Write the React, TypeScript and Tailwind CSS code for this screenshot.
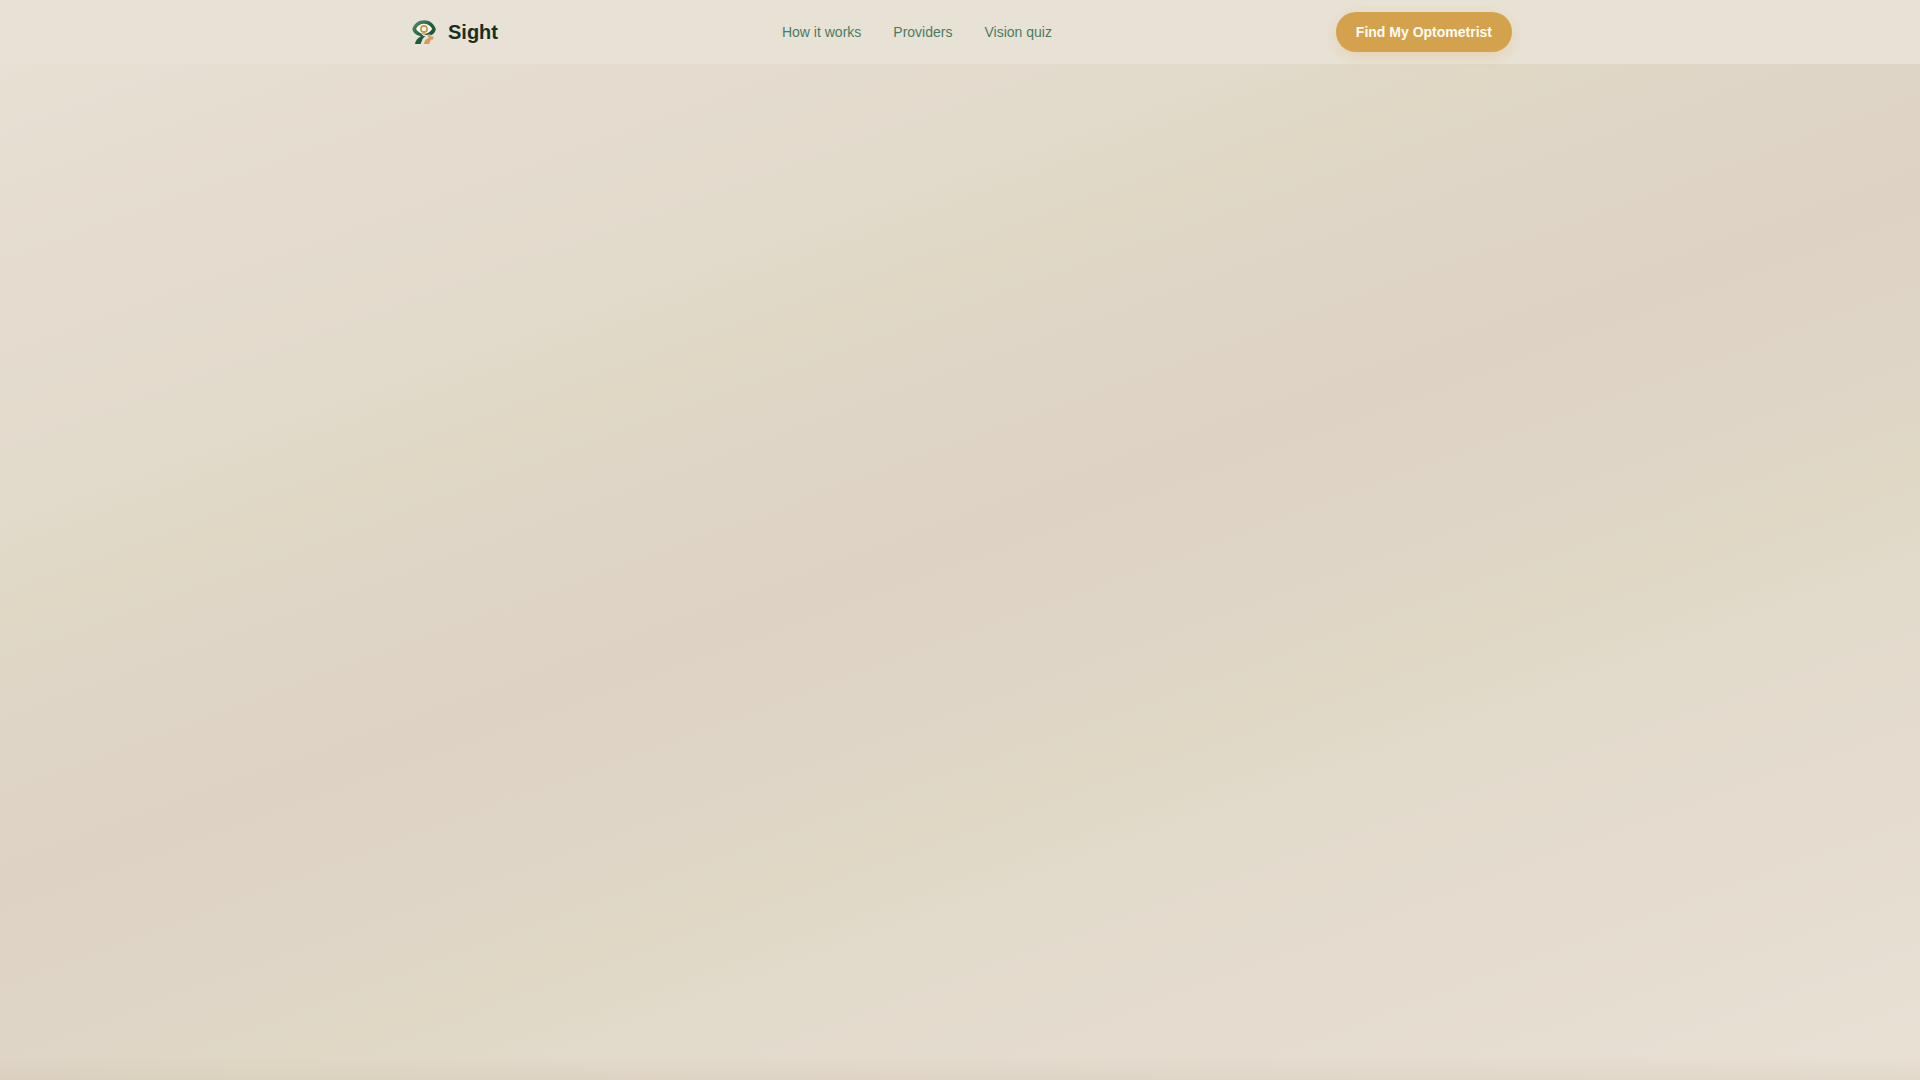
const links = [
  { label: 'How it works', href: '#how-it-works' },
  { label: 'Providers', href: '#providers' },
  { label: 'Vision quiz', href: '#vision-quiz' },
]

function Logo() {
  return (
    <svg viewBox="-4 -4 32 32" className="size-8" fill="none" aria-hidden="true">
      <defs>
        <linearGradient id="lid" x1="0" y1="0" x2="1" y2="1">
          <stop offset="0" stopColor="#5b9274" />
          <stop offset="0.5" stopColor="#215c42" />
          <stop offset="1" stopColor="#1e4d38" />
        </linearGradient>
      </defs>
      {/* eyelid and left leg */}
      <path
        d="M.3 9C2.200 3.400 6.600.2 12 .2S21.800 3.400 23.800 9c-.4 3-1.900 5-4.800 6.200L13.800 16c-2 1.300-3.300 2.800-3.800 4.400L8.600 24H3c.5-3.600 2.400-6 6-7.700C4.200 15.400 1 12.600.3 9Z"
        fill="url(#lid)"
      />
      <path d="M4 8.800C6 5.400 8.700 3.800 12 3.800s6.100 1.600 8.200 5c-1.400 2.900-4.200 5-8.200 5S5.500 11.700 4 8.800Z" fill="#fbf7ec" />
      <path d="M9 13.800l6 1.300 4-1.100-4 2.600-3.300-.6Z" fill="#f3ecdd" />
      <circle cx="12" cy="9" r="3.100" stroke="#c99443" strokeWidth="1.600" />
      {/* right leg */}
      <path d="M14.800 14.400c1.800 1.500 4 2.200 6.900 2.300l-.8 2.700-2.100.4L17.200 24H12c.3-2.900 1.800-4.900 4.800-6.300Z" fill="#d99a57" />
    </svg>
  )
}

export default function App() {
  return (
    <div className="flex min-h-screen flex-col bg-[linear-gradient(160deg,#e8e1d4_0%,#e6ddd1_12%,#e2dacb_28%,#e0d8c5_35%,#dfd6c7_39%,#ded2c4_50%,#dfd6c7_61%,#e0d8c5_65%,#e2dacb_72%,#e6ddd1_88%,#e8e1d4_100%)] font-['Liberation_Sans',sans-serif]">
      <header className="bg-[#e8e2d6]">
        <div className="mx-auto flex h-16 max-w-[1152px] items-center justify-between px-6">
          <a href="#" className="flex items-center gap-2 text-xl font-bold text-[#1a2e1f]">
            <Logo />
            Sight
          </a>
          <nav className="flex items-center gap-8 text-sm text-[#4a7c5f]">
            {links.map((link) => (
              <a key={link.href} href={link.href}>
                {link.label}
              </a>
            ))}
          </nav>
          <button
            type="button"
            className="h-10 rounded-full bg-[#d4a24c] px-5 text-sm font-bold text-[#fffdf5] shadow-[0_4px_14px_rgba(212,162,76,0.25)]"
          >
            Find My Optometrist
          </button>
        </div>
      </header>

      <main className="flex-1" />

      {/* soft edge above the next section */}
      <div className="h-6 bg-linear-to-b from-transparent to-[#c8b8a4]/20" />
    </div>
  )
}
